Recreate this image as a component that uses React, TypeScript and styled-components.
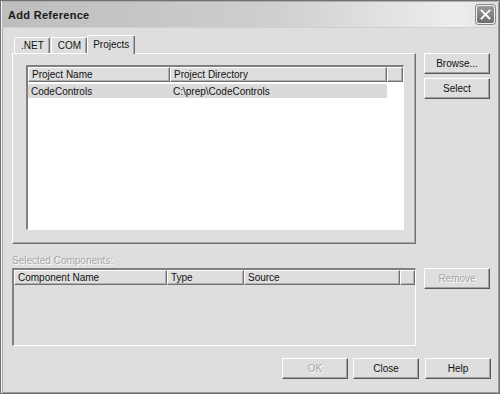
import React from 'react';
import styled, {createGlobalStyle} from 'styled-components';

const GlobalStyle = createGlobalStyle`
  body {
    margin: 0;
    background: #ffffff;
    font-family: "Liberation Sans", Arial, sans-serif;
  }
`;

const Window = styled.div`
  width: 500px;
  height: 394px;
  box-sizing: border-box;
  background: #dedede;
  border: 1px solid #707070;
  box-shadow: inset 1px 1px 0 #f4f4f4, inset -1px -1px 0 #9a9a9a, inset 2px 2px 0 #a8a8a8;
  display: flex;
  flex-direction: column;
  font-size: 10px;
  color: #111;
`;

const TitleBar = styled.div`
  height: 27px;
  margin: 0 1px;
  box-sizing: border-box;
  background: linear-gradient(to right, #bdbdbd 0%, #cfcfcf 55%, #eeeeee 92%, #e0e0e0 100%);
  border-top: 1px solid #b0b0b0;
  border-bottom: 1px solid #cfcfcf;
  display: flex;
  align-items: center;
  justify-content: space-between;
  padding: 0 3px 0 6px;
`;

const Title = styled.span`
  font-weight: bold;
  font-size: 11px;
  letter-spacing: 0.3px;
  color: #1a1a1a;
`;

const CloseBox = styled.div`
  width: 19px;
  height: 19px;
  box-sizing: border-box;
  border-radius: 3px;
  border: 1px solid #f0f0f0;
  background: linear-gradient(#9a9a9a, #6e6e6e);
  box-shadow: 0 0 0 1px #8a8a8a;
  display: flex;
  align-items: center;
  justify-content: center;
`;

const Body = styled.div`
  flex: 1;
  display: flex;
  flex-direction: column;
  padding: 7px 7px 13px 11px;
`;

const TopRow = styled.div`
  display: flex;
  gap: 8px;
`;

const TabArea = styled.div`
  width: 404px;
  display: flex;
  flex-direction: column;
`;

const TabStrip = styled.div`
  height: 18px;
  display: flex;
  align-items: flex-end;
  padding-left: 2px;
`;

const Tab = styled.div<{ $active?: boolean }>`
  box-sizing: border-box;
  height: ${({ $active }) => ($active ? '19px' : '16px')};
  margin: ${({ $active }) => ($active ? '0 -1px -1px -1px' : '0 1px 0 0')};
  padding: ${({ $active }) => ($active ? '0 5px 2px 5px' : '0 5px 0 6px')};
  background: #dedede;
  border-top: 1px solid #ffffff;
  border-left: 1px solid #ffffff;
  border-right: 1px solid #707070;
  box-shadow: inset -1px 0 0 #a8a8a8;
  border-radius: 2px 2px 0 0;
  display: flex;
  align-items: center;
  position: relative;
  z-index: ${({ $active }) => ($active ? 2 : 1)};
`;

const Panel = styled.div`
  height: 191px;
  box-sizing: border-box;
  border-top: 1px solid #ffffff;
  border-left: 1px solid #ffffff;
  border-right: 1px solid #707070;
  border-bottom: 1px solid #707070;
  box-shadow: inset -1px -1px 0 #a8a8a8;
  padding: 11px 11px 13px 13px;
  display: flex;
`;

const ListView = styled.div<{ $disabled?: boolean }>`
  flex: 1;
  box-sizing: border-box;
  background: ${({ $disabled }) => ($disabled ? '#dedede' : '#ffffff')};
  border-top: 2px solid #808080;
  border-left: 2px solid #808080;
  border-right: 1px solid #ffffff;
  border-bottom: 1px solid #ffffff;
  display: flex;
  flex-direction: column;
  overflow: hidden;
`;

const HeaderRow = styled.div`
  display: flex;
  height: 15px;
  flex-shrink: 0;
`;

const HeaderCell = styled.div<{ $w?: number }>`
  box-sizing: border-box;
  ${({ $w }) => ($w ? `width: ${$w}px;` : 'flex: 1;')}
  height: 15px;
  background: #dedede;
  border-top: 1px solid #ffffff;
  border-left: 1px solid #ffffff;
  border-right: 1px solid #707070;
  border-bottom: 1px solid #707070;
  box-shadow: inset -1px -1px 0 #b0b0b0;
  padding-left: 3px;
  display: flex;
  align-items: center;
  white-space: nowrap;
`;

const ItemRow = styled.div`
  display: flex;
  margin-top: 2px;
  height: 14px;
`;

const ItemCell = styled.div<{ $w: number }>`
  width: ${({ $w }) => $w}px;
  box-sizing: border-box;
  background: #dadada;
  padding-left: 3px;
  display: flex;
  align-items: center;
  white-space: nowrap;
`;

const ButtonColumn = styled.div`
  display: flex;
  flex-direction: column;
  gap: 4px;
  margin-top: 18px;
`;

const Button = styled.button<{ $disabled?: boolean; $gapLeft?: number }>`
  width: 66px;
  height: 21px;
  box-sizing: border-box;
  margin: 0 0 0 ${({ $gapLeft }) => $gapLeft ?? 0}px;
  padding: 0;
  font-family: "Liberation Sans", Arial, sans-serif;
  font-size: 10px;
  background: #dedede;
  color: ${({ $disabled }) => ($disabled ? '#a6a6a6' : '#111')};
  text-shadow: ${({ $disabled }) => ($disabled ? '1px 1px 0 #ffffff' : 'none')};
  border-top: 1px solid #ffffff;
  border-left: 1px solid #ffffff;
  border-right: 1px solid #5a5a5a;
  border-bottom: 1px solid #5a5a5a;
  box-shadow: inset -1px -1px 0 #a0a0a0;
  display: flex;
  align-items: center;
  justify-content: center;
`;

const SectionLabel = styled.div`
  margin-top: 10px;
  margin-bottom: 1px;
  height: 13px;
  line-height: 13px;
  color: #a6a6a6;
  text-shadow: 1px 1px 0 #ffffff;
`;

const LowerRow = styled.div`
  display: flex;
  gap: 8px;
  align-items: flex-start;
`;

const LowerList = styled.div`
  width: 404px;
  height: 78px;
  display: flex;
`;

const Footer = styled.div`
  margin-top: 12px;
  display: flex;
  justify-content: flex-end;
  gap: 5px;
  padding-right: 1px;
`;

export default function App() {
  return (
    <>
      <GlobalStyle />
      <Window>
        <TitleBar>
          <Title>Add Reference</Title>
          <CloseBox>
            <svg width="11" height="11" viewBox="0 0 11 11">
              <path d="M1.5 1.5 L9.5 9.5 M9.5 1.5 L1.5 9.5" stroke="#ffffff" strokeWidth="1.8" strokeLinecap="square" />
            </svg>
          </CloseBox>
        </TitleBar>
        <Body>
          <TopRow>
            <TabArea>
              <TabStrip>
                <Tab>.NET</Tab>
                <Tab>COM</Tab>
                <Tab $active>Projects</Tab>
              </TabStrip>
              <Panel>
                <ListView>
                  <HeaderRow>
                    <HeaderCell $w={142}>Project Name</HeaderCell>
                    <HeaderCell $w={217}>Project Directory</HeaderCell>
                    <HeaderCell />
                  </HeaderRow>
                  <ItemRow>
                    <ItemCell $w={142}>CodeControls</ItemCell>
                    <ItemCell $w={217}>C:\prep\CodeControls</ItemCell>
                  </ItemRow>
                </ListView>
              </Panel>
            </TabArea>
            <ButtonColumn>
              <Button>Browse...</Button>
              <Button>Select</Button>
            </ButtonColumn>
          </TopRow>
          <SectionLabel>Selected Components:</SectionLabel>
          <LowerRow>
            <LowerList>
              <ListView $disabled>
                <HeaderRow>
                  <HeaderCell $w={153}>Component Name</HeaderCell>
                  <HeaderCell $w={77}>Type</HeaderCell>
                  <HeaderCell $w={156}>Source</HeaderCell>
                  <HeaderCell />
                </HeaderRow>
              </ListView>
            </LowerList>
            <Button $disabled>Remove</Button>
          </LowerRow>
          <Footer>
            <Button $disabled>OK</Button>
            <Button>Close</Button>
            <Button $gapLeft={1}>Help</Button>
          </Footer>
        </Body>
      </Window>
    </>
  );
}
